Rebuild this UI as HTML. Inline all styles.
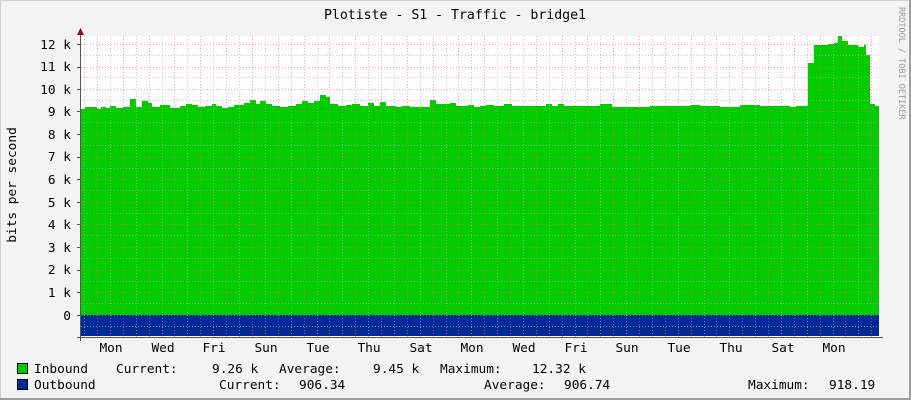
<!DOCTYPE html>
<html><head><meta charset="utf-8"><style>
html,body{margin:0;padding:0;width:911px;height:400px;overflow:hidden;background:#f3f3f3}
svg{display:block}
text{font-family:"DejaVu Sans Mono","Liberation Mono",monospace;font-size:12.8px;fill:#000}
</style></head><body>
<svg width="911" height="400" xmlns="http://www.w3.org/2000/svg">
<rect x="0" y="0" width="911" height="400" fill="#f3f3f3"/>
<rect x="0.5" y="0.5" width="909" height="398" fill="none" stroke="#cfcfcf"/>
<line x1="910" y1="0" x2="910" y2="400" stroke="#9e9e9e" stroke-width="2"/>
<line x1="0" y1="399" x2="911" y2="399" stroke="#9e9e9e" stroke-width="2"/>
<rect x="81" y="36" width="798" height="301" fill="#fff"/>
<path fill="#00cc00" d="M81,315 V109 H85 V107 H97 V109 H101 V107 H106 V108 H110 V106 H116 V108 H123 V107 H130 V99 H136 V107 H142 V101 H148 V103 H152 V107 H160 V105 H170 V108 H180 V106 H186 V104 H192 V105 H198 V107 H205 V106 H212 V104 H216 V106 H222 V108 H228 V107 H234 V105 H244 V103 H250 V100 H256 V104 H260 V101 H266 V104 H272 V106 H280 V107 H288 V106 H296 V104 H302 V101 H308 V103 H314 V101 H320 V95 H326 V97 H330 V104 H338 V106 H346 V105 H352 V104 H360 V106 H368 V103 H374 V106 H380 V102 H386 V106 H396 V107 H402 V106 H410 V107 H430 V100 H436 V104 H450 V103 H456 V106 H468 V105 H474 V107 H480 V106 H486 V105 H494 V106 H504 V104 H512 V106 H546 V104 H552 V106 H558 V104 H564 V106 H600 V104 H612 V107 H650 V106 H690 V105 H700 V106 H720 V107 H740 V105 H760 V106 H790 V107 H796 V106 H808 V63 H814 V45 H828 V44 H834 V43 H838 V36 H842 V41 H848 V45 H858 V47 H864 V45 H866 V55 H870 V104 H875 V106 H879 V315 Z"/>
<rect x="81" y="315" width="798" height="21" fill="#002a97"/>
<g stroke-width="1" fill="none">
<g stroke="#b0b0b0" stroke-dasharray="1,2" opacity="0.7">
<path d="M81,55.5H879M81,77.5H879M81,100.5H879M81,122.5H879M81,145.5H879M81,168.5H879M81,190.5H879M81,213.5H879M81,235.5H879M81,258.5H879M81,281.5H879M81,303.5H879M81,326.5H879"/>
<path d="M84.5,36V337M110.5,36V337M136.5,36V337M162.5,36V337M187.5,36V337M213.5,36V337M239.5,36V337M265.5,36V337M291.5,36V337M317.5,36V337M342.5,36V337M368.5,36V337M394.5,36V337M420.5,36V337M446.5,36V337M471.5,36V337M497.5,36V337M523.5,36V337M549.5,36V337M575.5,36V337M600.5,36V337M626.5,36V337M652.5,36V337M678.5,36V337M704.5,36V337M729.5,36V337M755.5,36V337M781.5,36V337M807.5,36V337M833.5,36V337M858.5,36V337"/>
</g>
<g stroke="#ff6060" stroke-dasharray="1,2" opacity="0.6">
<path d="M81,44.5H879M81,67.5H879M81,89.5H879M81,111.5H879M81,134.5H879M81,157.5H879M81,179.5H879M81,202.5H879M81,224.5H879M81,247.5H879M81,270.5H879M81,292.5H879M81,315.5H879"/>
<path d="M97.5,36V337M123.5,36V337M149.5,36V337M174.5,36V337M200.5,36V337M226.5,36V337M252.5,36V337M278.5,36V337M304.5,36V337M329.5,36V337M355.5,36V337M381.5,36V337M407.5,36V337M433.5,36V337M458.5,36V337M484.5,36V337M510.5,36V337M536.5,36V337M562.5,36V337M587.5,36V337M613.5,36V337M639.5,36V337M665.5,36V337M691.5,36V337M716.5,36V337M742.5,36V337M768.5,36V337M794.5,36V337M820.5,36V337M845.5,36V337M871.5,36V337"/>
</g>
</g>
<line x1="80.5" y1="32" x2="80.5" y2="341" stroke="#555"/>
<line x1="77" y1="337.5" x2="883" y2="337.5" stroke="#555"/>
<polygon points="77,35 84,35 80.5,28" fill="#7f1010"/>
<path d="M77,44.5H80M77,67.5H80M77,89.5H80M77,111.5H80M77,134.5H80M77,157.5H80M77,179.5H80M77,202.5H80M77,224.5H80M77,247.5H80M77,270.5H80M77,292.5H80M77,315.5H80" stroke="#555"/>
<text x="455" y="19" text-anchor="middle" style="font-size:13.2px">Plotiste - S1 - Traffic - bridge1</text>
<g text-anchor="end">
<text x="71" y="49">12 k</text><text x="71" y="71">11 k</text><text x="71" y="94">10 k</text>
<text x="71" y="116">9 k</text><text x="71" y="139">8 k</text><text x="71" y="161">7 k</text>
<text x="71" y="184">6 k</text><text x="71" y="207">5 k</text><text x="71" y="229">4 k</text>
<text x="71" y="252">3 k</text><text x="71" y="274">2 k</text><text x="71" y="297">1 k</text>
<text x="71" y="320">0</text>
</g>
<text transform="translate(16,185) rotate(-90)" text-anchor="middle">bits per second</text>
<text transform="translate(899,7) rotate(90)" style="font-size:8.5px;fill:#999">RRDTOOL / TOBI OETIKER</text>
<g text-anchor="middle">
<text x="111" y="352">Mon</text><text x="163" y="352">Wed</text><text x="214" y="352">Fri</text>
<text x="266" y="352">Sun</text><text x="318" y="352">Tue</text><text x="369" y="352">Thu</text>
<text x="421" y="352">Sat</text><text x="472" y="352">Mon</text><text x="524" y="352">Wed</text>
<text x="576" y="352">Fri</text><text x="627" y="352">Sun</text><text x="679" y="352">Tue</text>
<text x="731" y="352">Thu</text><text x="783" y="352">Sat</text><text x="834" y="352">Mon</text>
</g>
<rect x="17.5" y="363.5" width="10" height="10" fill="#00cc00" stroke="#000"/>
<rect x="17.5" y="379.5" width="10" height="10" fill="#002a97" stroke="#000"/>
<text x="34" y="373">Inbound</text>
<text x="116" y="373">Current:</text>
<text x="212" y="373">9.26 k</text>
<text x="279" y="373">Average:</text>
<text x="373" y="373">9.45 k</text>
<text x="440" y="373">Maximum:</text>
<text x="532" y="373">12.32 k</text>
<text x="34" y="389">Outbound</text>
<text x="219" y="389">Current:</text><text x="299" y="389">906.34</text>
<text x="484" y="389">Average:</text><text x="564" y="389">906.74</text>
<text x="748" y="389">Maximum:</text><text x="829" y="389">918.19</text>
</svg>
</body></html>
